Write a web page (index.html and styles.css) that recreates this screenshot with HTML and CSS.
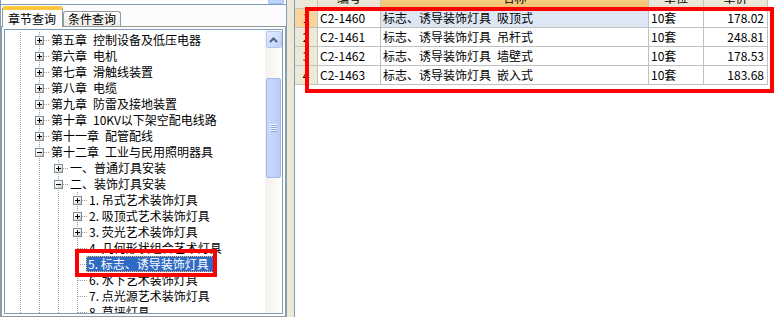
FILE: index.html
```html
<!DOCTYPE html>
<html lang="zh-CN">
<head>
<meta charset="UTF-8">
<title>定额查询</title>
<link rel="stylesheet" href="styles.css">
</head>
<body>
<div class="app">
    <div class="left">
        <div class="top-strip"><span class="top-thumb"></span></div>
        <div class="tabs">
            <div class="tab active">章节查询</div>
            <div class="tab">条件查询</div>
        </div>
        <div class="pane">
            <div class="tree">
                <div class="nodes">
                    <div class="node"><span class="guide"></span><span class="joint"><i class="box plus"></i></span><span class="label">第五章&ensp;控制设备及低压电器</span></div>
                    <div class="node"><span class="guide"></span><span class="joint"><i class="box plus"></i></span><span class="label">第六章&ensp;电机</span></div>
                    <div class="node"><span class="guide"></span><span class="joint"><i class="box plus"></i></span><span class="label">第七章&ensp;滑触线装置</span></div>
                    <div class="node"><span class="guide"></span><span class="joint"><i class="box plus"></i></span><span class="label">第八章&ensp;电缆</span></div>
                    <div class="node"><span class="guide"></span><span class="joint"><i class="box plus"></i></span><span class="label">第九章&ensp;防雷及接地装置</span></div>
                    <div class="node"><span class="guide"></span><span class="joint"><i class="box plus"></i></span><span class="label">第十章&ensp;10KV以下架空配电线路</span></div>
                    <div class="node"><span class="guide"></span><span class="joint"><i class="box plus"></i></span><span class="label">第十一章&ensp;配管配线</span></div>
                    <div class="node"><span class="guide"></span><span class="joint"><i class="box minus"></i></span><span class="label">第十二章&ensp;工业与民用照明器具</span></div>
                    <div class="node"><span class="guide"></span><span class="guide"></span><span class="joint"><i class="box plus"></i></span><span class="label">一、普通灯具安装</span></div>
                    <div class="node"><span class="guide"></span><span class="guide"></span><span class="joint"><i class="box minus"></i></span><span class="label">二、装饰灯具安装</span></div>
                    <div class="node"><span class="guide"></span><span class="guide"></span><span class="guide"></span><span class="joint"><i class="box plus"></i></span><span class="label">1. 吊式艺术装饰灯具</span></div>
                    <div class="node"><span class="guide"></span><span class="guide"></span><span class="guide"></span><span class="joint"><i class="box plus"></i></span><span class="label">2. 吸顶式艺术装饰灯具</span></div>
                    <div class="node"><span class="guide"></span><span class="guide"></span><span class="guide"></span><span class="joint"><i class="box plus"></i></span><span class="label">3. 荧光艺术装饰灯具</span></div>
                    <div class="node"><span class="guide"></span><span class="guide"></span><span class="guide"></span><span class="joint"></span><span class="label">4. 几何形状组合艺术灯具</span></div>
                    <div class="node"><span class="guide"></span><span class="guide"></span><span class="guide"></span><span class="joint"></span><span class="label selected">5. 标志、诱导装饰灯具</span></div>
                    <div class="node"><span class="guide"></span><span class="guide"></span><span class="guide"></span><span class="joint"></span><span class="label">6. 水下艺术装饰灯具</span></div>
                    <div class="node"><span class="guide"></span><span class="guide"></span><span class="guide"></span><span class="joint"></span><span class="label">7. 点光源艺术装饰灯具</span></div>
                    <div class="node"><span class="guide"></span><span class="guide"></span><span class="guide"></span><span class="joint"></span><span class="label">8. 草坪灯具</span></div>
                </div>
                <div class="vscroll">
                    <div class="sb-btn">
                        <svg width="9" height="6" viewBox="0 0 9 6"><path d="M1 5L4.5 1.5L8 5" fill="none" stroke="#4d6185" stroke-width="2"/></svg>
                    </div>
                    <div class="sb-thumb">
                        <svg width="7" height="8" viewBox="0 0 7 8">
                            <path d="M0 0.5h7M0 2.5h7M0 4.5h7M0 6.5h7" stroke="#eef4fe"/>
                            <path d="M1 1.5h7M1 3.5h7M1 5.5h7M1 7.5h7" stroke="#8ca8e6"/>
                        </svg>
                    </div>
                </div>
            </div>
        </div>
    </div>

    <div class="splitter"></div>

    <div class="right">
        <div class="grid">
            <div class="cell ind hd"></div>
            <div class="cell hd">编号</div>
            <div class="cell hd sorted">名称</div>
            <div class="cell hd">单位</div>
            <div class="cell hd">单价</div>

            <div class="cell ind current">1</div>
            <div class="cell">C2-1460</div>
            <div class="cell focus">标志、诱导装饰灯具&ensp;吸顶式</div>
            <div class="cell">10套</div>
            <div class="cell num">178.02</div>

            <div class="cell ind">2</div>
            <div class="cell">C2-1461</div>
            <div class="cell">标志、诱导装饰灯具&ensp;吊杆式</div>
            <div class="cell">10套</div>
            <div class="cell num">248.81</div>

            <div class="cell ind">3</div>
            <div class="cell">C2-1462</div>
            <div class="cell">标志、诱导装饰灯具&ensp;墙壁式</div>
            <div class="cell">10套</div>
            <div class="cell num">178.53</div>

            <div class="cell ind">4</div>
            <div class="cell">C2-1463</div>
            <div class="cell">标志、诱导装饰灯具&ensp;嵌入式</div>
            <div class="cell">10套</div>
            <div class="cell num">183.68</div>
        </div>
    </div>

    <!-- red annotation frames -->
    <div class="mark mark-tree"></div>
    <div class="mark mark-grid"></div>
</div>
</body>
</html>
```

FILE: styles.css
```css
body {
    margin: 0;
    font-family: "Noto Sans CJK SC", "Liberation Sans", sans-serif;
    font-size: 12px;
    color: #000;
    background: #fff;
}

.app {
    position: relative;
    display: flex;
    width: 777px;
    height: 317px;
    overflow: hidden;
}

/* Left side: tab control with the chapter tree */
.left {
    width: 286px;
    flex: none;
    display: flex;
    flex-direction: column;
    border-left: 1px solid #7f9db9;
    box-sizing: border-box;
    background: #fcfcfe;
}

.top-strip {
    height: 4px;
    background: #fff;
    border-bottom: 1px solid #7f9db9;
    display: flex;
    justify-content: flex-end;
    padding-right: 2px;
}

.top-thumb {
    width: 14px;
    height: 3px;
    background: #c1d3fb;
    border: 1px solid #a6bdf0;
    border-top: none;
    border-radius: 0 0 2px 2px;
}

.tabs {
    height: 21px;
    display: flex;
    align-items: flex-end;
    padding-left: 1px;
}

.tab {
    height: 14px;
    line-height: 14px;
    padding: 0 4px;
    border: 1px solid #919b9c;
    border-bottom: none;
    border-radius: 3px 3px 0 0;
    background: linear-gradient(#ffffff, #ecebe6);
    white-space: nowrap;
}

.tab.active {
    height: 18px;
    line-height: 19px;
    padding: 0 6px 0 5px;
    margin-bottom: -1px;
    background: #fcfcfe;
    border-top: 3px solid #ffc83c;
    box-shadow: inset 0 1px 0 #ffc83c;
    position: relative;
    z-index: 1;
}

.pane {
    flex: 1;
    min-height: 0;
    border: 1px solid #919b9c;
    padding: 2px;
    display: flex;
}

.tree {
    flex: 1;
    display: flex;
    border: 1px solid #7f9db9;
    background: #fff;
    overflow: hidden;
}

.nodes {
    flex: 1;
    padding: 2px 0 0 6px;
}

.node {
    display: flex;
    height: 16px;
    white-space: nowrap;
}

.guide,
.joint {
    width: 19px;
    flex: none;
    background: repeating-linear-gradient(#a0a0a0 0 1px, transparent 1px 2px) 9px 0 / 1px 100% no-repeat;
}

.joint {
    display: flex;
    align-items: center;
    justify-content: center;
    background:
        repeating-linear-gradient(to right, #a0a0a0 0 1px, transparent 1px 2px) 10px 8px / 9px 1px no-repeat,
        repeating-linear-gradient(#a0a0a0 0 1px, transparent 1px 2px) 9px 0 / 1px 100% no-repeat;
}

.box {
    position: relative;
    width: 7px;
    height: 7px;
    border: 1px solid #7a8c9c;
    background: linear-gradient(135deg, #ffffff 30%, #c9c6b8);
}

.box::before,
.box::after {
    content: "";
    position: absolute;
    background: #000;
}

.box::before {
    left: 1px;
    top: 3px;
    width: 5px;
    height: 1px;
}

.box.plus::after {
    left: 3px;
    top: 1px;
    width: 1px;
    height: 5px;
}

.label {
    height: 16px;
    line-height: 16px;
    padding: 0 1px;
    margin-left: 1px;
}

.selected {
    margin-left: -1px;
    padding: 0 5px 0 2px;
    background: #316ac5;
    color: #fff;
    outline: 1px dotted #e8c070;
    outline-offset: -1px;
}

/* Scroll bar of the tree */
.vscroll {
    width: 17px;
    flex: none;
    background: linear-gradient(to right, #f3f1ec, #fefefb);
    padding-top: 1px;
    display: flex;
    flex-direction: column;
    align-items: center;
}

.sb-btn {
    width: 14px;
    height: 15px;
    border: 1px solid #b6c8f4;
    border-radius: 2px;
    background: linear-gradient(135deg, #e4ecfe, #bdcffa);
    display: flex;
    align-items: center;
    justify-content: center;
}

.sb-thumb {
    width: 13px;
    height: 98px;
    margin-top: 30px;
    border: 1px solid #a3b8ec;
    border-radius: 2px;
    background: linear-gradient(to right, #c9d8fd, #b9ccf8);
    display: flex;
    align-items: center;
    justify-content: center;
}

.splitter {
    width: 7px;
    flex: none;
    background: #ece9d8;
    border-left: 1px solid #7f9db9;
    border-right: 1px solid #7f9db9;
}

/* Right side: quota grid */
.right {
    flex: 1;
    background: #fff;
    overflow: hidden;
}

.grid {
    display: grid;
    grid-template-columns: 23px 63px 268px 55px 64px;
    grid-auto-rows: 19px;
    margin-top: -10px;
}

.cell {
    box-sizing: border-box;
    border-right: 1px solid #c0c0c0;
    border-bottom: 1px solid #c0c0c0;
    padding: 0 2px;
    line-height: 18px;
    white-space: nowrap;
    overflow: hidden;
}

.cell.hd {
    text-align: center;
    line-height: 16px;
    background: linear-gradient(#f5f3ea, #e6e2d0);
    border-color: #c8c4b4;
}

.cell.hd.sorted {
    background: linear-gradient(#f8dba4, #f2c06a);
}

.cell.ind {
    text-align: center;
    background: #ece9d8;
    border-color: #c8c4b4;
    padding: 0;
}

.cell.ind.current {
    background: #f8d39c;
}

.cell.focus {
    background: #dde7f4;
}

.cell.num {
    text-align: right;
    padding-right: 3px;
}

/* Red annotation frames drawn over the screenshot */
.mark {
    position: absolute;
    box-sizing: border-box;
    border: 4px solid #ff0000;
    pointer-events: none;
}

.mark-tree {
    left: 75px;
    top: 249px;
    width: 142px;
    height: 28px;
}

.mark-grid {
    left: 305px;
    top: 7px;
    width: 469px;
    height: 86px;
}
```
